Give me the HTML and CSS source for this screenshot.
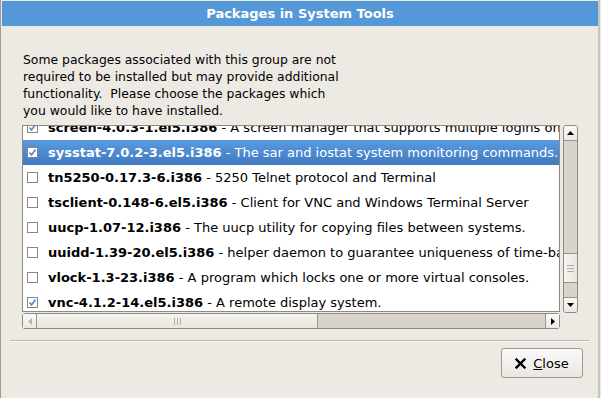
FILE: index.html
```html
<!DOCTYPE html>
<html>
<head>
<meta charset="utf-8">
<link rel="stylesheet" href="styles.css">
</head>
<body>
<div class="window">
  <div class="titlebar">Packages in System Tools</div>
  <div class="content">
    <p class="intro">Some packages associated with this group are not<br>required to be installed but may provide additional<br>functionality.  Please choose the packages which<br>you would like to have installed.</p>
    <div class="listarea">
      <div class="list">
        <div class="rows">
          <div class="row"><span class="cb checked"><svg viewBox="0 0 11 11" width="11" height="11"><rect x="0.5" y="0.5" width="10" height="10" fill="#fff" stroke="#8a867f"/><path d="M2.5 5.5 L4.5 8 L8.5 2.5" fill="none" stroke="#4b8ad3" stroke-width="1.6"/></svg></span><b>screen-4.0.3-1.el5.i386</b>&nbsp;- A screen manager that supports multiple logins on</div>
          <div class="row sel"><span class="cb checked"><svg viewBox="0 0 11 11" width="11" height="11"><rect x="0.5" y="0.5" width="10" height="10" fill="#fff" stroke="#8a867f"/><path d="M2.5 5.5 L4.5 8 L8.5 2.5" fill="none" stroke="#4b8ad3" stroke-width="1.6"/></svg></span><b>sysstat-7.0.2-3.el5.i386</b>&nbsp;- The sar and iostat system monitoring commands.</div>
          <div class="row"><span class="cb"><svg viewBox="0 0 11 11" width="11" height="11"><rect x="0.5" y="0.5" width="10" height="10" fill="#fff" stroke="#8a867f"/></svg></span><b>tn5250-0.17.3-6.i386</b>&nbsp;- 5250 Telnet protocol and Terminal</div>
          <div class="row"><span class="cb"><svg viewBox="0 0 11 11" width="11" height="11"><rect x="0.5" y="0.5" width="10" height="10" fill="#fff" stroke="#8a867f"/></svg></span><b>tsclient-0.148-6.el5.i386</b>&nbsp;- Client for VNC and Windows Terminal Server</div>
          <div class="row"><span class="cb"><svg viewBox="0 0 11 11" width="11" height="11"><rect x="0.5" y="0.5" width="10" height="10" fill="#fff" stroke="#8a867f"/></svg></span><b>uucp-1.07-12.i386</b>&nbsp;- The uucp utility for copying files between systems.</div>
          <div class="row"><span class="cb"><svg viewBox="0 0 11 11" width="11" height="11"><rect x="0.5" y="0.5" width="10" height="10" fill="#fff" stroke="#8a867f"/></svg></span><b>uuidd-1.39-20.el5.i386</b>&nbsp;- helper daemon to guarantee uniqueness of time-based UUIDs</div>
          <div class="row"><span class="cb"><svg viewBox="0 0 11 11" width="11" height="11"><rect x="0.5" y="0.5" width="10" height="10" fill="#fff" stroke="#8a867f"/></svg></span><b>vlock-1.3-23.i386</b>&nbsp;- A program which locks one or more virtual consoles.</div>
          <div class="row"><span class="cb checked"><svg viewBox="0 0 11 11" width="11" height="11"><rect x="0.5" y="0.5" width="10" height="10" fill="#fff" stroke="#8a867f"/><path d="M2.5 5.5 L4.5 8 L8.5 2.5" fill="none" stroke="#4b8ad3" stroke-width="1.6"/></svg></span><b>vnc-4.1.2-14.el5.i386</b>&nbsp;- A remote display system.</div>
        </div>
      </div>
      <div class="vscroll">
        <div class="sbtn"><svg width="7" height="4" viewBox="0 0 7 4"><path d="M0 4 L3.5 0 L7 4Z" fill="#000"/></svg></div>
        <div class="vtrough">
          <div class="vthumb"><span class="grip-h"></span><span class="grip-h"></span><span class="grip-h"></span></div>
        </div>
        <div class="sbtn"><svg width="7" height="4" viewBox="0 0 7 4"><path d="M0 0 L3.5 4 L7 0Z" fill="#000"/></svg></div>
      </div>
      <div class="hscroll">
        <div class="sbtn h dim"><svg width="4" height="7" viewBox="0 0 4 7"><path d="M4 0 L0 3.5 L4 7Z" fill="#b9b5ae"/></svg></div>
        <div class="hthumb"><span class="grip-v"></span><span class="grip-v"></span><span class="grip-v"></span></div>
        <div class="htrough"></div>
        <div class="sbtn h"><svg width="4" height="7" viewBox="0 0 4 7"><path d="M0 0 L4 3.5 L0 7Z" fill="#000"/></svg></div>
      </div>
    </div>
  </div>
  <div class="separator"></div>
  <div class="actions">
    <button class="btn"><svg class="xicon" width="11" height="11" viewBox="0 0 11 11"><path d="M1.5 1.5 L9.5 9.5 M9.5 1.5 L1.5 9.5" stroke="#000" stroke-width="2.4" stroke-linecap="square"/></svg><span><u>C</u>lose</span></button>
  </div>
</div>
</body>
</html>
```

FILE: styles.css
```css
html, body {
  margin: 0;
  padding: 0;
  background: #edeae4;
}
.window {
  width: 600px;
  height: 398px;
  box-sizing: border-box;
  border-left: 1px solid #a29e96;
  border-right: 2px solid #c9c5bd;
  background: #edeae4;
  font-family: "DejaVu Sans", sans-serif;
  font-size: 13px;
  color: #000;
  overflow: hidden;
}
.titlebar {
  margin: 1px 0 0 1px;
  height: 25px;
  background: #5498d8;
  color: #fff;
  font-weight: bold;
  font-size: 13px;
  display: flex;
  align-items: center;
  justify-content: center;
}
.content {
  padding: 0 0 0 21px;
}
.intro {
  margin: 25px 0 0 1px;
  font-size: 12.4px;
  line-height: 17px;
  white-space: pre;
}
.listarea {
  margin-top: 6px;
  display: grid;
  grid-template-columns: 538px 15px;
  grid-template-rows: 187px 16px;
  column-gap: 3px;
  row-gap: 1px;
}
.list {
  border: 1px solid #8e8a82;
  background: #fff;
  overflow: hidden;
}
.rows {
  margin-top: -11px;
}
.row {
  height: 25px;
  display: flex;
  align-items: center;
  white-space: nowrap;
  padding-left: 4px;
}
.row.sel {
  background: linear-gradient(#5b9be0, #3f79c0);
  color: #fff;
}
.cb {
  width: 11px;
  height: 11px;
  margin-right: 10px;
  display: flex;
  flex: none;
}
.vscroll {
  border: 1px solid #8e8a82;
  border-radius: 3px;
  background: #d9d4cb;
  display: flex;
  flex-direction: column;
  height: 186px;
  margin-top: 0;
}
.sbtn {
  height: 14px;
  flex: none;
  background: linear-gradient(#fbfaf8, #ebe8e2);
  display: flex;
  align-items: center;
  justify-content: center;
}
.vscroll .sbtn:first-child {
  border-bottom: 1px solid #9a968e;
  border-radius: 2px 2px 0 0;
}
.vscroll .sbtn:last-child {
  border-top: 1px solid #9a968e;
  border-radius: 0 0 2px 2px;
}
.vtrough {
  flex: 1;
  display: flex;
  flex-direction: column;
  justify-content: flex-end;
  padding-bottom: 14px;
}
.vthumb {
  height: 28px;
  background: linear-gradient(90deg, #f6f4f1, #e9e6e0);
  border-top: 1px solid #9a968e;
  border-bottom: 1px solid #9a968e;
  display: flex;
  flex-direction: column;
  align-items: center;
  justify-content: center;
  gap: 2px;
}
.grip-h {
  width: 7px;
  height: 1px;
  background: #b3afa7;
}
.hscroll {
  grid-column: 1;
  border: 1px solid #8e8a82;
  border-radius: 3px;
  background: #d9d4cb;
  display: flex;
  height: 14px;
}
.sbtn.h {
  width: 13px;
  height: 14px;
}
.hscroll .sbtn:first-child {
  border-right: 1px solid #9a968e;
}
.hscroll .sbtn:last-child {
  border-left: 1px solid #9a968e;
}
.hthumb {
  width: 280px;
  background: linear-gradient(#f6f4f1, #e9e6e0);
  border-right: 1px solid #9a968e;
  display: flex;
  align-items: center;
  justify-content: center;
  gap: 2px;
}
.grip-v {
  width: 1px;
  height: 7px;
  background: #b3afa7;
}
.htrough {
  flex: 1;
}
.separator {
  margin: 11px 9px 0 9px;
  height: 1px;
  background: #bdb9b1;
  border-bottom: 1px solid #f9f8f6;
}
.actions {
  display: flex;
  justify-content: flex-end;
  padding: 6px 15px 0 0;
}
.btn {
  width: 82px;
  height: 30px;
  box-sizing: border-box;
  border: 1px solid #9f9b93;
  border-radius: 3px;
  background: linear-gradient(#fbfaf9, #e9e6e1);
  font-family: "DejaVu Sans", sans-serif;
  font-size: 13px;
  color: #000;
  display: flex;
  align-items: center;
  justify-content: center;
  gap: 7px;
  padding: 0;
}
.xicon {
  flex: none;
}
```
